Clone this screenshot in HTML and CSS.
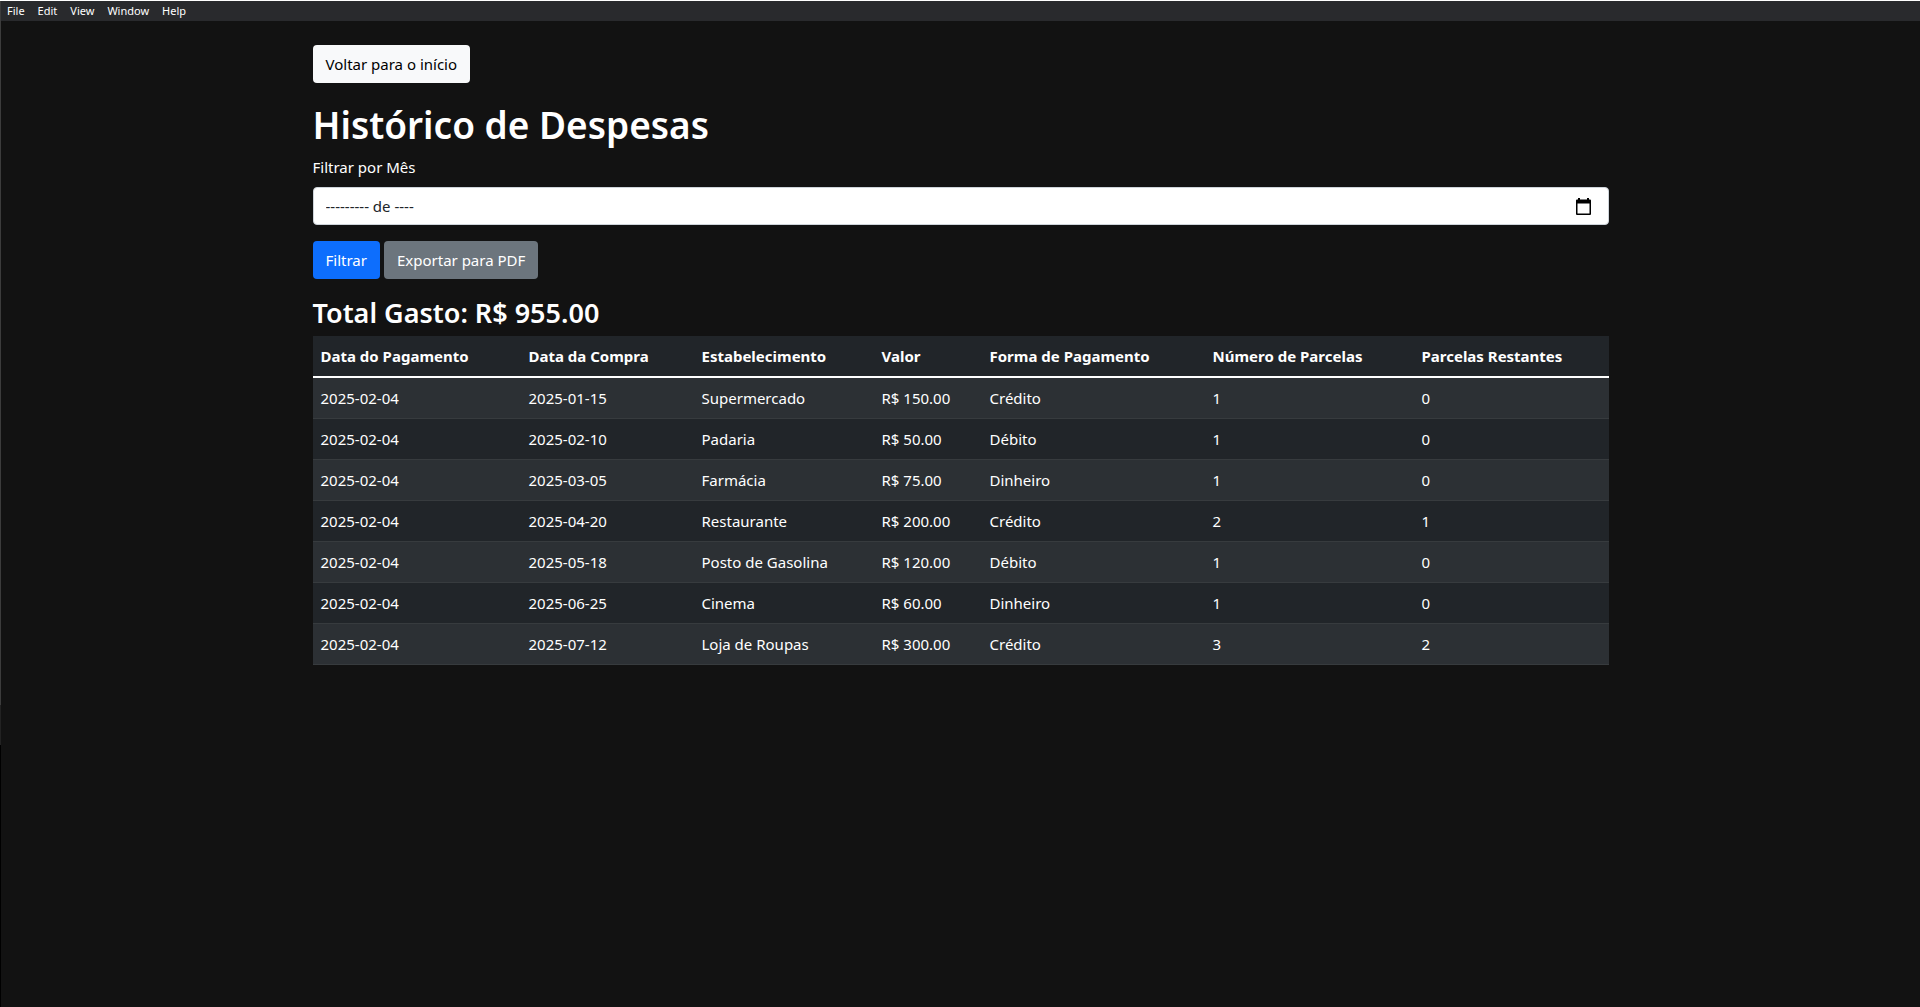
FILE: index.html
```html
<!DOCTYPE html>
<html lang="pt-BR">
<head>
<meta charset="utf-8">
<meta name="viewport" content="width=device-width, initial-scale=1">
<title>Histórico de Despesas</title>
<link rel="stylesheet" href="styles.css">
</head>
<body>
<div class="window">
  <nav class="menubar" aria-label="Menu">
    <button type="button" class="menu-item">File</button>
    <button type="button" class="menu-item">Edit</button>
    <button type="button" class="menu-item">View</button>
    <button type="button" class="menu-item">Window</button>
    <button type="button" class="menu-item">Help</button>
  </nav>
  <main class="container">
    <a class="btn btn-light" href="#">Voltar para o início</a>
    <h1 class="title">Histórico de Despesas</h1>
    <form class="filter">
      <label class="form-label" for="mes">Filtrar por Mês</label>
      <div class="month-field">
        <input class="month-input" id="mes" name="mes" type="text" value="--------- de ----">
        <button type="button" class="picker" aria-label="Abrir calendário">
          <svg width="15" height="17" viewBox="0 0 15 17" aria-hidden="true">
            <path fill="#000" fill-rule="evenodd" d="M2 0h2v1.500h7V0h2v1.500h1a1 1 0 0 1 1 1V16a1 1 0 0 1-1 1H1a1 1 0 0 1-1-1V2.500a1 1 0 0 1 1-1h1zM1.500 5.500v10h12v-10z"/>
          </svg>
        </button>
      </div>
      <div class="actions">
        <button type="button" class="btn btn-primary">Filtrar</button>
        <button type="button" class="btn btn-secondary">Exportar para PDF</button>
      </div>
    </form>
    <h3 class="total">Total Gasto: R$ 955.00</h3>
    <table class="table">
      <colgroup>
        <col class="c-pay"><col class="c-buy"><col class="c-shop"><col class="c-value"><col class="c-method"><col class="c-count"><col class="c-left">
      </colgroup>
      <thead>
        <tr><th scope="col">Data do Pagamento</th><th scope="col">Data da Compra</th><th scope="col">Estabelecimento</th><th scope="col">Valor</th><th scope="col">Forma de Pagamento</th><th scope="col">Número de Parcelas</th><th scope="col">Parcelas Restantes</th></tr>
      </thead>
      <tbody>
        <tr><td>2025-02-04</td><td>2025-01-15</td><td>Supermercado</td><td>R$ 150.00</td><td>Crédito</td><td>1</td><td>0</td></tr>
        <tr><td>2025-02-04</td><td>2025-02-10</td><td>Padaria</td><td>R$ 50.00</td><td>Débito</td><td>1</td><td>0</td></tr>
        <tr><td>2025-02-04</td><td>2025-03-05</td><td>Farmácia</td><td>R$ 75.00</td><td>Dinheiro</td><td>1</td><td>0</td></tr>
        <tr><td>2025-02-04</td><td>2025-04-20</td><td>Restaurante</td><td>R$ 200.00</td><td>Crédito</td><td>2</td><td>1</td></tr>
        <tr><td>2025-02-04</td><td>2025-05-18</td><td>Posto de Gasolina</td><td>R$ 120.00</td><td>Débito</td><td>1</td><td>0</td></tr>
        <tr><td>2025-02-04</td><td>2025-06-25</td><td>Cinema</td><td>R$ 60.00</td><td>Dinheiro</td><td>1</td><td>0</td></tr>
        <tr><td>2025-02-04</td><td>2025-07-12</td><td>Loja de Roupas</td><td>R$ 300.00</td><td>Crédito</td><td>3</td><td>2</td></tr>
      </tbody>
    </table>
  </main>
</div>
</body>
</html>
```
FILE: styles.css
```css
*, *::before, *::after { box-sizing: border-box; }

body {
  margin: 0;
  background: #121212;
  color: #fff;
  font: 400 15px/24px "Segoe UI", "Noto Sans", sans-serif;
}

button, input { font: inherit; color: inherit; }

/* Window frame: light top edge, shaded left edge */
.window {
  min-height: 100vh;
  padding-left: 1px;
  border-top: 1px solid #fff;
  background: linear-gradient(#3c3c3c 70%, #222 70%, #222 74%, #000 74%) left top / 1px 100% no-repeat;
}

.menubar {
  display: flex;
  gap: 1px;
  height: 20px;
  background: #292a2d;
}

.menu-item {
  padding: 0 6px;
  border: 0;
  background: none;
  font-size: 11px;
  line-height: 20px;
}

.container {
  max-width: 1320px;
  margin: 0 auto;
  padding: 24px 12px;
}

.btn {
  display: inline-block;
  padding: 6px 12px;
  border: 1px solid transparent;
  border-radius: 4px;
  text-decoration: none;
  cursor: pointer;
}

.btn-light { background: #f8f9fa; color: #000; }
.btn-primary { background: #0d6efd; }
.btn-secondary { background: #6c757d; }

.title {
  margin: 16px 0 4px;
  font-size: 37px;
  font-weight: 600;
  line-height: 52px;
}

.form-label { display: block; margin-bottom: 8px; }

.month-field {
  display: flex;
  align-items: center;
  height: 38px;
  padding: 0 17px 0 12px;
  border: 1px solid #ced4da;
  border-radius: 4px;
  background: #fff;
  color: #212529;
}

.month-input {
  flex: 1;
  min-width: 0;
  padding: 0;
  border: 0;
  outline: 0;
  background: none;
}

.picker { display: flex; padding: 0; border: 0; background: none; }

.actions { display: flex; gap: 4px; margin-top: 16px; }

.total {
  margin: 16px 0 6px;
  font-size: 27px;
  font-weight: 600;
  line-height: 35px;
}

.table {
  width: 100%;
  table-layout: fixed;
  border-collapse: collapse;
  background: #212529;
}

.c-pay { width: 208px; }
.c-buy { width: 173px; }
.c-shop { width: 180px; }
.c-value { width: 108px; }
.c-method { width: 223px; }
.c-count { width: 209px; }
.c-left { width: 195px; }

.table th, .table td {
  padding: 8px;
  border-bottom: 1px solid #373b3e;
  text-align: left;
}

.table th { font-weight: 700; }
.table tbody { border-top: 2px solid #fff; }
.table tbody tr:nth-child(odd) { background: #2c3034; }
```
